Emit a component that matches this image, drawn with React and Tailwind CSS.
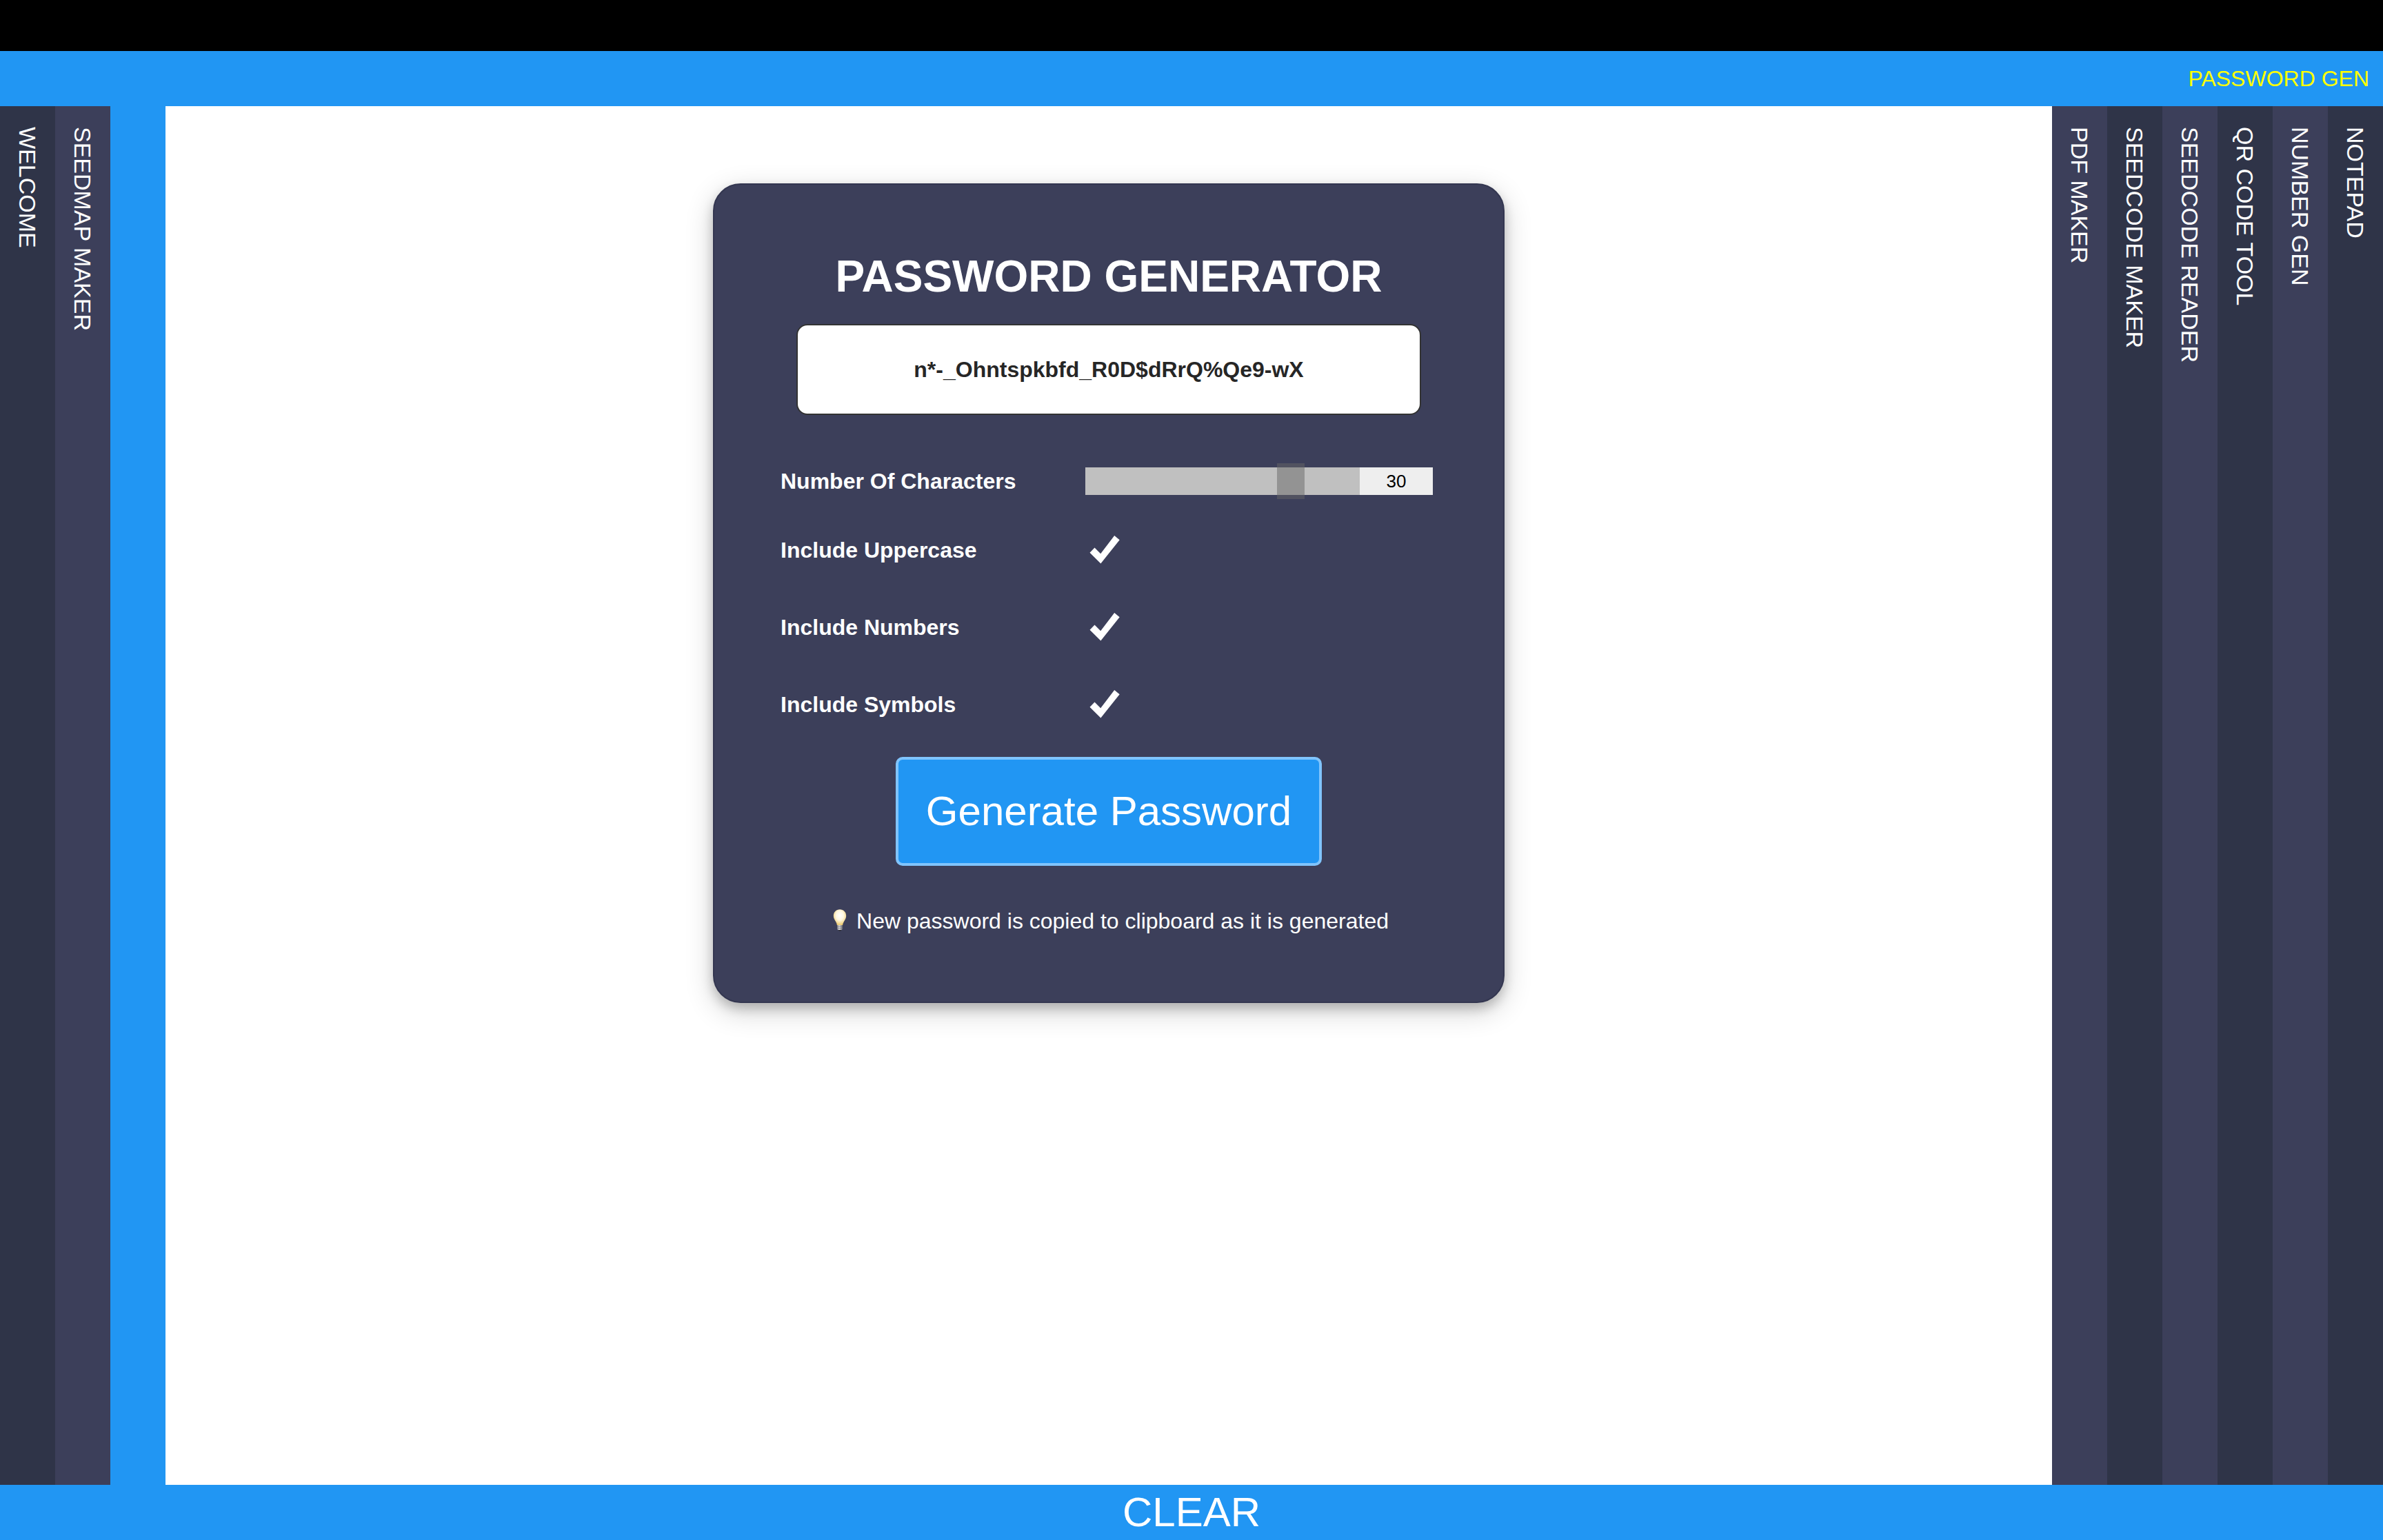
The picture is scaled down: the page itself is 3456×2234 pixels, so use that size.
import { useState } from "react";

const leftTabs = [
  { name: "WELCOME", tone: "bg-[#2f3448]" },
  { name: "SEEDMAP MAKER", tone: "bg-[#3c3f5a]" },
];

const rightTabs = [
  { name: "PDF MAKER", tone: "bg-[#3c3f5a]" },
  { name: "SEEDCODE MAKER", tone: "bg-[#2f3448]" },
  { name: "SEEDCODE READER", tone: "bg-[#3c3f5a]" },
  { name: "QR CODE TOOL", tone: "bg-[#2f3448]" },
  { name: "NUMBER GEN", tone: "bg-[#3c3f5a]" },
  { name: "NOTEPAD", tone: "bg-[#2f3448]" },
];

const LOWER = "abcdefghijklmnopqrstuvwxyz";
const SETS = {
  uppercase: "ABCDEFGHIJKLMNOPQRSTUVWXYZ",
  numbers: "0123456789",
  symbols: "!$%*-_+=?",
};

function Tab({ name, tone }) {
  return (
    <button
      type="button"
      className={`flex w-20 items-center justify-start pt-[30px] text-[34px] leading-[40px] text-white [writing-mode:vertical-rl] ${tone}`}
    >
      {name}
    </button>
  );
}

function Option({ id, label, checked, onChange }) {
  return (
    <div className="flex h-28 items-center">
      <label htmlFor={id} className="w-[440px] text-[32px] leading-[40px] font-bold">
        {label}
      </label>
      <div className="grid size-15">
        <input
          id={id}
          type="checkbox"
          checked={checked}
          onChange={(e) => onChange(e.target.checked)}
          className="peer col-start-1 row-start-1 size-15 appearance-none"
        />
        <svg
          viewBox="0 0 60 60"
          aria-hidden="true"
          className="pointer-events-none invisible col-start-1 row-start-1 size-15 fill-white peer-checked:visible"
        >
          <polygon points="8.5,33.7 15.5,26.4 24.2,35.3 44.2,9 51.7,15.2 24.4,49.5" />
        </svg>
      </div>
    </div>
  );
}

function Bulb() {
  return (
    <svg viewBox="2 2 32 36" aria-hidden="true" className="h-9 w-8">
      <defs>
        <radialGradient id="glass" cx="0.5" cy="0.38" r="0.6">
          <stop offset="0" stopColor="#ffffff" />
          <stop offset="0.5" stopColor="#fff8df" />
          <stop offset="1" stopColor="#ecca70" />
        </radialGradient>
        <linearGradient id="cap" x1="0" x2="1" y1="0" y2="0">
          <stop offset="0" stopColor="#85858a" />
          <stop offset="0.4" stopColor="#e2e2e2" />
          <stop offset="1" stopColor="#6d6d72" />
        </linearGradient>
      </defs>
      <path
        d="M18 3.300c-5.400 0-9.200 4-9.200 9.300 0 3.600 1.700 5.900 3.300 8.300 1 1.600 1.600 3.400 1.900 5.400h8c.3-2 .9-3.800 1.900-5.400 1.600-2.400 3.300-4.700 3.300-8.300C27.200 7.300 23.400 3.300 18 3.300z"
        fill="url(#glass)"
      />
      <path d="M14.200 26h7.600v6l-1 1h-5.600l-1-1z" fill="url(#cap)" />
      <path d="M14.200 28h7.600M14.200 30.500h7.600" stroke="#77777c" strokeWidth="0.700" />
      <path d="M15.500 33h5l-1.500 1.500h-2z" fill="#2b2b30" />
    </svg>
  );
}

export default function App() {
  const [password, setPassword] = useState("n*-_Ohntspkbfd_R0D$dRrQ%Qe9-wX");
  const [length, setLength] = useState(30);
  const [options, setOptions] = useState({ uppercase: true, numbers: true, symbols: true });

  const setOption = (key) => (value) => setOptions((o) => ({ ...o, [key]: value }));

  const generate = () => {
    const pool =
      LOWER +
      Object.keys(SETS)
        .filter((key) => options[key])
        .map((key) => SETS[key])
        .join("");
    let next = "";
    for (let i = 0; i < length; i++) next += pool[Math.floor(Math.random() * pool.length)];
    setPassword(next);
    navigator.clipboard?.writeText(next);
  };

  return (
    <div className="flex min-h-screen flex-col bg-white font-['Liberation_Sans',Arial,sans-serif] text-white">
      <div className="h-[74px] bg-black" />
      <header className="flex h-20 items-center justify-end bg-[#2196f3] px-5">
        <button type="button" className="text-[32px] leading-[40px] text-[#ffff00]">
          PASSWORD GEN
        </button>
      </header>

      <div className="flex grow">
        <nav className="flex" aria-label="Open tools">
          {leftTabs.map((t) => (
            <Tab key={t.name} {...t} />
          ))}
          <div className="w-20 bg-[#2196f3]" />
        </nav>

        <main className="flex grow items-start justify-center pt-28">
          <section className="flex w-full max-w-[1148px] flex-col rounded-[40px] border-2 border-[#333650] bg-[#3c3f5a] px-24 pt-24 pb-[97px] shadow-[0_8px_16px_rgba(0,0,0,0.2),0_12px_40px_rgba(0,0,0,0.19)]">
            <h1 className="text-center text-[64px] leading-[74px] font-bold">PASSWORD GENERATOR</h1>
            <input
              type="text"
              readOnly
              aria-label="Generated password"
              value={password}
              className="mt-8 h-33 w-[906px] self-center rounded-[16px] border-2 border-[#333333] bg-white text-center text-[32px] font-bold text-[#262626]"
            />

            <div className="mt-13 flex h-22 items-center">
              <label htmlFor="length" className="w-[442px] text-[32px] leading-[40px] font-bold">
                Number Of Characters
              </label>
              <input
                id="length"
                type="range"
                min="2"
                max="38"
                value={length}
                onChange={(e) => setLength(Number(e.target.value))}
                className="h-10 w-[398px] appearance-none bg-[#c0c0c0] [&::-webkit-slider-thumb]:h-13 [&::-webkit-slider-thumb]:w-10 [&::-webkit-slider-thumb]:appearance-none [&::-webkit-slider-thumb]:bg-[#666666]/50"
              />
              <output
                htmlFor="length"
                className="h-10 w-[106px] bg-[#eeeeee] text-center text-[26px] leading-[40px] text-black"
              >
                {length}
              </output>
            </div>
            <Option
              id="uppercase"
              label="Include Uppercase"
              checked={options.uppercase}
              onChange={setOption("uppercase")}
            />
            <Option
              id="numbers"
              label="Include Numbers"
              checked={options.numbers}
              onChange={setOption("numbers")}
            />
            <Option
              id="symbols"
              label="Include Symbols"
              checked={options.symbols}
              onChange={setOption("symbols")}
            />

            <button
              type="button"
              onClick={generate}
              className="mt-5 self-center rounded-[10px] border-4 border-[#80c4fc] bg-[#2196f3] px-10 py-10 text-[60px] leading-[70px]"
            >
              Generate Password
            </button>
            <p className="mt-15 flex items-center justify-center gap-2 text-[32px] leading-[40px]">
              <Bulb />
              New password is copied to clipboard as it is generated
            </p>
          </section>
        </main>

        <nav className="flex" aria-label="More tools">
          {rightTabs.map((t) => (
            <Tab key={t.name} {...t} />
          ))}
        </nav>
      </div>

      <button type="button" className="h-20 bg-[#2196f3] text-center text-[60px] leading-[80px]">
        CLEAR
      </button>
    </div>
  );
}
